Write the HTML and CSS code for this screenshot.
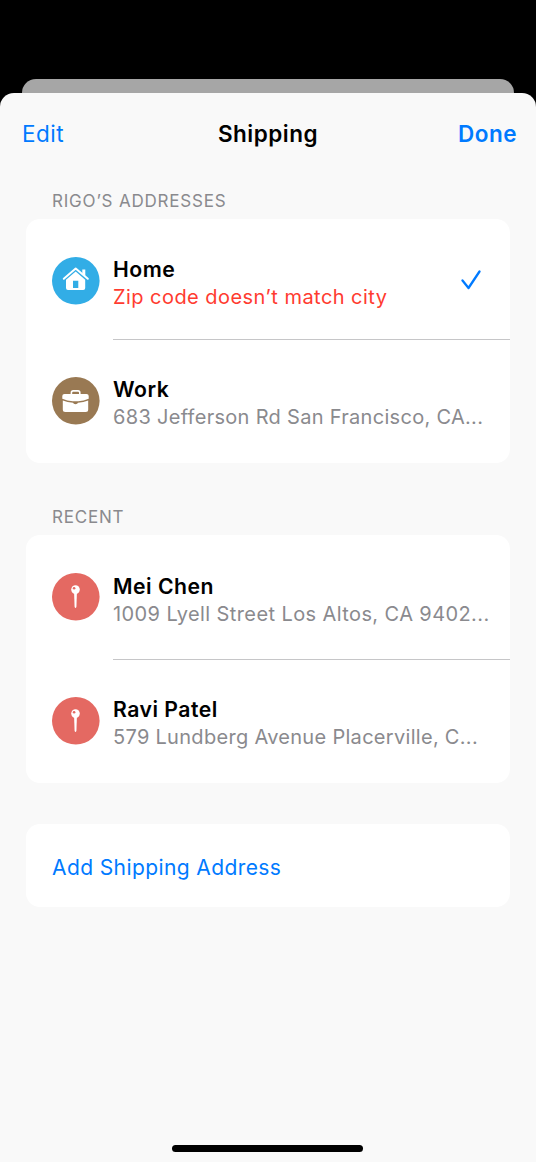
FILE: index.html
```html
<!DOCTYPE html>
<html lang="en">
<head>
<meta charset="utf-8">
<title>Shipping</title>
<link rel="stylesheet" href="styles.css">
</head>
<body>
<div class="screen">
<div class="backdrop"></div>
<main class="sheet">
<header class="nav"><span class="edit">Edit</span><h1 class="title">Shipping</h1><span class="done">Done</span></header>
<h2 class="section-title">RIGO’S ADDRESSES</h2>
<section class="card saved">
<div class="row">
<svg class="icon" viewBox="0 0 48 48"><circle cx="23.800" cy="23.800" r="23.800" fill="#32ade6"/><path d="M11.800 21.800 23.700 11.600 35.800 21.800" fill="none" stroke="#fff" stroke-width="2" stroke-linecap="round" stroke-linejoin="round"/><path d="M30.300 12.500h3v6.500l-3-2.500z" fill="#fff"/><path fill-rule="evenodd" d="M23.700 14.600 33.200 22.700V31q0 2-2 2h-15.200q-2 0-2-2v-8.300zM21 23.800V31h5.300v-7.200z" fill="#fff"/></svg>
<div class="info"><div class="text"><h3 class="name">Home</h3><p class="detail error">Zip code doesn’t match city</p></div>
<svg class="check" viewBox="0 0 20 20"><path d="M1.500 10.500 7.500 18 18.500 1.500" fill="none" stroke="#007aff" stroke-width="2.300" stroke-linecap="round" stroke-linejoin="round"/></svg></div>
</div>
<div class="row">
<svg class="icon" viewBox="0 0 48 48"><circle cx="23.800" cy="23.800" r="23.800" fill="#997953"/><path d="M19.400 18v-2.300q0-1.800 1.800-1.800h4.800q1.800 0 1.800 1.800V18" fill="none" stroke="#fff" stroke-width="1.600"/><path d="M12.500 17h22q2.200 0 2.200 2v2.800q-5 2.200-10.500 2.500h-5.400q-5.500-.3-10.500-2.500V19q0-2 2.200-2zM10.800 23.500q4.500 1.900 10.200 2.300.5 1.400 2.500 1.400t2.500-1.400q5.700-.4 10.200-2.300v9q0 2.500-2.500 2.500H13.300q-2.500 0-2.500-2.500z" fill="#fff"/></svg>
<div class="info"><div class="text"><h3 class="name">Work</h3><p class="detail tight">683 Jefferson Rd San Francisco, CA...</p></div></div>
</div>
</section>
<h2 class="section-title recent-title">RECENT</h2>
<section class="card recent">
<div class="row">
<svg class="icon" viewBox="0 0 48 48"><circle cx="23.800" cy="23.800" r="23.800" fill="#e46962"/><circle cx="23.500" cy="16.600" r="4.300" fill="#fff"/><circle cx="22.100" cy="15.200" r="1.300" fill="#e46962"/><path d="M22.100 20h2.800l-.5 14q-.9 1.800-1.800 0z" fill="#fff"/></svg>
<div class="info"><div class="text"><h3 class="name">Mei Chen</h3><p class="detail">1009 Lyell Street Los Altos, CA 9402...</p></div></div>
</div>
<div class="row">
<svg class="icon" viewBox="0 0 48 48"><circle cx="23.800" cy="23.800" r="23.800" fill="#e46962"/><circle cx="23.500" cy="16.600" r="4.300" fill="#fff"/><circle cx="22.100" cy="15.200" r="1.300" fill="#e46962"/><path d="M22.100 20h2.800l-.5 14q-.9 1.800-1.800 0z" fill="#fff"/></svg>
<div class="info"><div class="text"><h3 class="name">Ravi Patel</h3><p class="detail tight">579 Lundberg Avenue Placerville, C...</p></div></div>
</div>
</section>
<section class="card add">Add Shipping Address</section>
<div class="home-indicator"></div>
</main>
</div>
</body>
</html>
```
FILE: styles.css
```css
* { box-sizing: border-box; }
body { margin: 0; font-family: Inter, "Liberation Sans", sans-serif; background: #000; }
h1, h2, h3, p { margin: 0; }
.screen { width: 536px; height: 1162px; padding-top: 79px; display: flex; flex-direction: column; overflow: hidden; }
.backdrop { height: 28px; flex: none; margin: 0 22px -14px; background: #a6a6a6; border-radius: 14px 14px 0 0; }
.sheet { flex: 1; background: #f9f9f9; border-radius: 14px 14px 0 0; display: flex; flex-direction: column; padding: 0 26px 10px; }
.nav { height: 82px; display: grid; grid-template-columns: 1fr auto 1fr; align-items: center; margin: 0 -5px; font-size: 22.500px; line-height: 26px; color: #007aff; }
.title { color: #000; font-size: 22.500px; font-weight: 600; letter-spacing: .5px; padding-bottom: 1px; }
.edit { letter-spacing: .5px; padding-left: 1px; }
.done { text-align: right; font-weight: 600; letter-spacing: .5px; margin-right: -2px; }
.section-title { font-size: 17px; line-height: 20px; font-weight: 400; letter-spacing: .8px; color: #8a8a8e; margin: 16px 26px 8px; white-space: nowrap; }
.recent-title { margin-top: 44px; }
.card { background: #fff; border-radius: 14px; flex: none; }
.row { height: 123px; display: flex; align-items: center; padding-left: 26px; }
.row:first-child { height: 125px; }
.saved .row:first-child { height: 121px; }
.saved .row:first-child .icon { margin-top: 3px; }
.icon { width: 48px; height: 48px; flex: none; margin-right: 13px; }
.row:first-child .icon { margin-top: -1px; }
.row:last-child .icon { margin-top: 1px; margin-bottom: 2px; }
.info { flex: 1; min-width: 0; height: 100%; display: flex; align-items: center; justify-content: space-between; padding-right: 28px; }
.row:first-child .info { border-bottom: 1px solid #c6c6c8; }
.text { padding-top: 3px; }
.recent .row:first-child .text { padding-top: 5px; }
.saved .row:first-child .text { padding-top: 8px; }
.name { font-size: 21.200px; line-height: 28px; font-weight: 600; letter-spacing: .5px; }
.detail { font-size: 20px; line-height: 28px; color: #8a8a8e; letter-spacing: .4px; white-space: nowrap; }
.tight { letter-spacing: .3px; }
.error { color: #ff3b30; letter-spacing: .45px; }
.check { width: 20px; height: 20px; flex: none; margin: 1px 1px 0 0; }
.add { height: 83px; margin-top: 41px; padding: 31px 26px 26px; color: #007aff; font-size: 21px; line-height: 26px; letter-spacing: .4px; }
.home-indicator { width: 191px; height: 7px; border-radius: 4px; background: #000; margin: auto auto 0 146px; }
```
